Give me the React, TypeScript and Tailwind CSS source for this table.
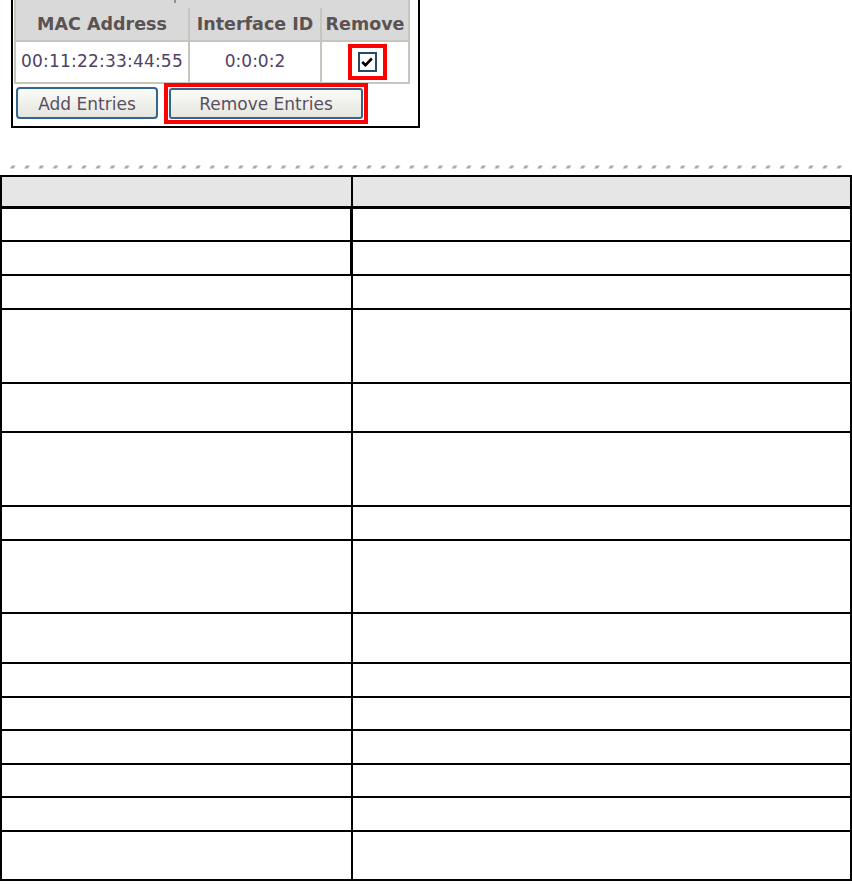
import React from 'react';

const rows = [33, 34, 34, 74, 49, 74, 34, 73, 50, 34, 33, 34, 33, 34, 49];

const verdana = { fontFamily: '"DejaVu Sans", Verdana, sans-serif' };

const CheckMark = () => (
  <svg width="12" height="10" viewBox="0 0 12 10">
    <path d="M1.2 5 L4.5 8.2 L10.8 1.5" fill="none" stroke="#000" strokeWidth="2.6" />
  </svg>
);

const ScreenshotBox = () => (
  <div className="ml-[11px] w-[409px] h-[128px] border-x-2 border-b-2 border-black relative" style={verdana}>
    {/* little mark left over from the crop */}
    <div className="absolute left-[161px] top-0 w-[2px] h-[3px] bg-[#9a8f80]" />
    <div className="ml-[1px] w-[396px]">
      <div className="flex h-[42px] pt-[8px] bg-[#d9d9d9] border-x-2 border-b-2 border-[#c6c6be] text-[17.5px] font-bold text-[#5c5252]">
        <div className="w-[174px] flex items-center justify-center border-r-2 border-[#c6c6be]">MAC Address</div>
        <div className="w-[132px] flex items-center justify-center border-r-2 border-[#c6c6be] whitespace-nowrap">Interface ID</div>
        <div className="flex-1 flex items-center justify-center whitespace-nowrap">Remove</div>
      </div>
      <div className="flex h-[42px] border-x-2 border-b-2 border-[#c6c6be] text-[17px] text-[#4e4266]">
        <div className="w-[174px] flex items-center justify-center border-r-2 border-[#c6c6be] whitespace-nowrap tracking-[0.2px]">00:11:22:33:44:55</div>
        <div className="w-[132px] flex items-center justify-center border-r-2 border-[#c6c6be]">0:0:0:2</div>
        <div className="flex-1 flex items-center justify-center">
          <div className="ml-[4px] w-[39px] h-[36px] border-4 border-[#ff0000] flex items-center justify-center">
            <div className="w-[19px] h-[20px] border-2 border-[#24496b] bg-white flex items-center justify-center">
              <CheckMark />
            </div>
          </div>
        </div>
      </div>
    </div>
    <div className="flex items-start -mt-[1px] ml-[3px]">
      <button className="mt-[4px] w-[142px] h-[32px] pt-[3px] rounded-[4px] border-2 border-[#35648f] bg-gradient-to-b from-[#fbfbf8] to-[#e6e6df] text-[17px] text-[#5a4f60] flex items-center justify-center">
        Add Entries
      </button>
      <div className="ml-[6px] w-[204px] h-[41px] border-4 border-[#ff0000] p-[1px]">
        <button className="w-full h-full pt-[2px] rounded-[3px] border-2 border-[#35648f] bg-gradient-to-b from-[#fbfbf8] to-[#e6e6df] text-[17px] text-[#5a4f60] flex items-center justify-center">
          Remove Entries
        </button>
      </div>
    </div>
  </div>
);

const DashedRule = () => (
  <svg className="block mt-[37px] ml-[10px]" width="832" height="4">
    <defs>
      <pattern id="dash" width="14.25" height="4" patternUnits="userSpaceOnUse">
        <polygon points="0,3.5 1.8,0.5 5.5,0.5 3.7,3.5" fill="#a8a8a8" />
      </pattern>
    </defs>
    <rect width="832" height="4" fill="url(#dash)" />
  </svg>
);

export default function App() {
  return (
    <div className="w-[852px] h-[884px] bg-white overflow-hidden">
      <ScreenshotBox />
      <DashedRule />
      <div className="mt-[6px] w-[852px] border-2 border-black">
        <div className="flex h-[32px] bg-[#e6e6e6] border-b-[3px] border-black">
          <div className="w-[351px] border-r-2 border-black" />
          <div className="flex-1" />
        </div>
        {rows.map((h, i) => (
          <div
            key={i}
            className={i < rows.length - 1 ? 'flex border-b-2 border-black' : 'flex'}
            style={{ height: i < rows.length - 1 ? h : h - 2 }}
          >
            <div className={i < 2 ? 'w-[351px] border-r-[3px] border-black' : 'w-[351px] border-r-2 border-black'} />
            <div className="flex-1" />
          </div>
        ))}
      </div>
    </div>
  );
}
